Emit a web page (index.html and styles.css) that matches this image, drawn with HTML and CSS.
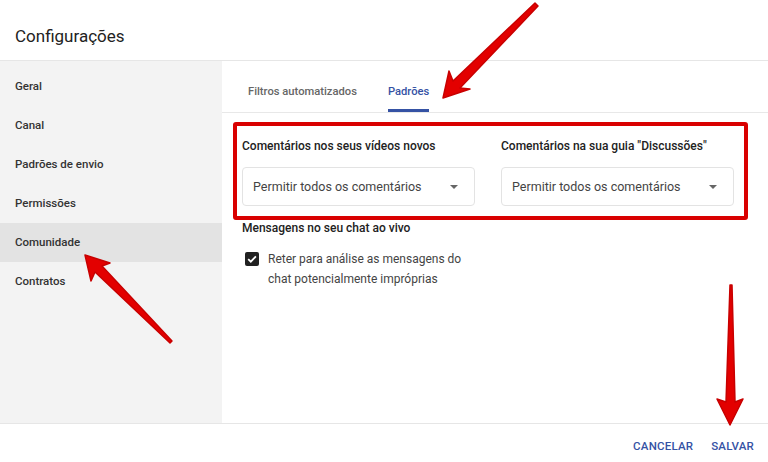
FILE: index.html
```html
<!DOCTYPE html>
<html lang="pt-BR">
<head>
  <meta charset="UTF-8">
  <title>Configurações</title>
  <link rel="stylesheet" href="styles.css">
</head>
<body>
  <div class="dialog">
    <div class="dialog-header">Configurações</div>

    <div class="dialog-body">
      <!-- menu lateral -->
      <div class="sidebar">
        <div class="nav-item">Geral</div>
        <div class="nav-item">Canal</div>
        <div class="nav-item">Padrões de envio</div>
        <div class="nav-item">Permissões</div>
        <div class="nav-item active">Comunidade</div>
        <div class="nav-item">Contratos</div>
      </div>

      <div class="content">
        <div class="tabs">
          <div class="tab">Filtros automatizados</div>
          <div class="tab active">Padrões</div>
        </div>

        <div class="highlight-box">
          <div class="field">
            <div class="field-label">Comentários nos seus vídeos novos</div>
            <div class="select">
              <span>Permitir todos os comentários</span>
              <span class="caret"></span>
            </div>
          </div>
          <div class="field">
            <div class="field-label">Comentários na sua guia "Discussões"</div>
            <div class="select">
              <span>Permitir todos os comentários</span>
              <span class="caret"></span>
            </div>
          </div>
        </div>

        <div class="chat-section">
          <div class="field-label">Mensagens no seu chat ao vivo</div>
          <div class="check-row">
            <span class="checkbox">
              <svg width="12" height="12" viewBox="0 0 12 12"><path d="M2.2 6.2 L4.8 8.7 L9.9 3.4" fill="none" stroke="#fff" stroke-width="1.8"/></svg>
            </span>
            <span class="check-text">Reter para análise as mensagens do<br>chat potencialmente impróprias</span>
          </div>
        </div>
      </div>
    </div>

    <div class="dialog-footer">
      <button class="btn">Cancelar</button>
      <button class="btn">Salvar</button>
    </div>
  </div>

  <!-- setas vermelhas de destaque -->
  <svg class="arrows" width="768" height="462" viewBox="0 0 768 462">
    <polygon points="443,98 470,89 460,88 538,6 535,3 453,81 449,71"/>
    <polygon points="85,255 110,263 102,266 172,341 170,343 95,272 91,281"/>
    <polygon points="730,425 743,399 735,402 732,285 730,285 726,402 717,399"/>
  </svg>
</body>
</html>
```

FILE: styles.css
```css
body {
  margin: 0;
  font-family: Roboto, "Noto Sans", sans-serif;
  background: #fff;
  color: #282828;
  position: relative;
  width: 768px;
  height: 462px;
  overflow: hidden;
}

.dialog {
  display: flex;
  flex-direction: column;
  height: 462px;
}

.dialog-header {
  height: 61px;
  flex-shrink: 0;
  box-sizing: border-box;
  padding: 26px 0 0 15px;
  font-size: 17px;
  color: #222;
  border-bottom: 1px solid #e6e6e6;
}

.dialog-body {
  display: flex;
  height: 362px;
  flex-shrink: 0;
}

.sidebar {
  width: 222px;
  background: #f3f3f3;
  padding-top: 6px;
  box-sizing: border-box;
}

.nav-item {
  height: 39px;
  line-height: 39px;
  padding-left: 15px;
  font-size: 11.5px;
  font-weight: 500;
  color: #333;
}

.nav-item.active {
  background: #e3e3e3;
}

.content {
  flex: 1;
  display: flex;
  flex-direction: column;
}

.tabs {
  display: flex;
  gap: 31px;
  height: 51px;
  flex-shrink: 0;
  padding-left: 26px;
  border-bottom: 1px solid #e8e8e8;
}

.tab {
  height: 51px;
  box-sizing: border-box;
  padding-top: 24px;
  font-size: 11.2px;
  font-weight: 500;
  color: #666;
  border-bottom: 3px solid transparent;
}

.tab.active {
  color: #3552a4;
  border-bottom-color: #3552a4;
}

.highlight-box {
  display: flex;
  gap: 26px;
  width: 515px;
  box-sizing: border-box;
  margin: 9px 0 0 11px;
  padding: 12px 10px 10px 5px;
  border: 4px solid #d90000;
  border-radius: 3px;
}

.field {
  flex: 1;
}

.field-label {
  font-size: 12px;
  font-weight: 500;
  color: #222;
  line-height: 16px;
}

.select {
  margin-top: 13px;
  height: 39px;
  box-sizing: border-box;
  border: 1px solid #e3e3e3;
  border-radius: 4px;
  display: flex;
  align-items: center;
  justify-content: space-between;
  padding: 0 16px 0 10px;
  font-size: 12.5px;
  color: #444;
}

.caret {
  width: 0;
  height: 0;
  border-left: 4px solid transparent;
  border-right: 4px solid transparent;
  border-top: 4px solid #666;
}

.chat-section {
  padding: 0 0 0 20px;
}

.check-row {
  display: flex;
  align-items: flex-start;
  margin-top: 13px;
  padding-left: 3px;
}

.checkbox {
  width: 14px;
  height: 14px;
  background: #212121;
  border-radius: 2px;
  margin-top: 3px;
  display: flex;
  align-items: center;
  justify-content: center;
}

.check-text {
  margin-left: 9px;
  font-size: 12px;
  line-height: 20px;
  color: #444;
}

.dialog-footer {
  flex: 1;
  border-top: 1px solid #e6e6e6;
  display: flex;
  justify-content: flex-end;
  align-items: center;
  gap: 2px;
  padding: 5px 6px 0 0;
}

.btn {
  background: none;
  border: none;
  font-family: Roboto, "Noto Sans", sans-serif;
  font-size: 11.5px;
  font-weight: 500;
  text-transform: uppercase;
  color: #3552a4;
  padding: 6px 8px;
  letter-spacing: 0.2px;
}

.arrows {
  position: absolute;
  top: 0;
  left: 0;
  pointer-events: none;
}

.arrows polygon {
  fill: #e30000;
  stroke: #c80000;
  stroke-width: 1.5;
  stroke-linejoin: round;
}
```
